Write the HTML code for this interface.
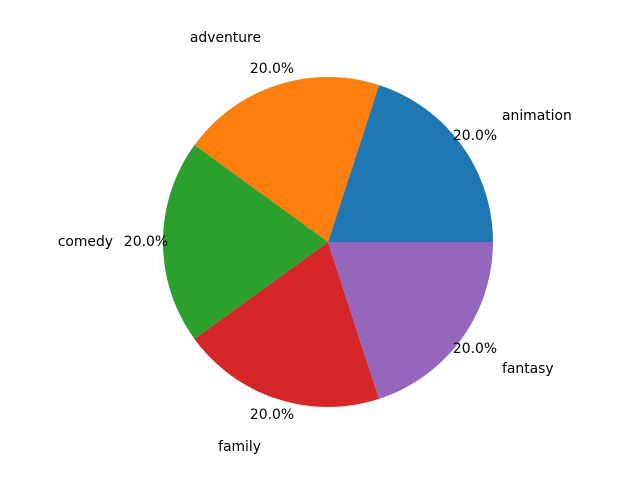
<!DOCTYPE html>
<html><head><meta charset="utf-8"><style>
html,body{margin:0;padding:0;background:#fff;}
svg{display:block;}
text{font-family:"DejaVu Sans","Liberation Sans",sans-serif;font-size:13.9px;fill:#000;dominant-baseline:central;}
</style></head><body>
<svg width="640" height="480" viewBox="0 0 640 480" xmlns="http://www.w3.org/2000/svg">
<rect width="640" height="480" fill="#fff"/>
<path d="M328,242 L493,242 A165,165 0 0 0 379.0,85.1 Z" fill="#1f77b4"/>
<path d="M328,242 L379.0,85.1 A165,165 0 0 0 194.5,145.0 Z" fill="#ff7f0e"/>
<path d="M328,242 L194.5,145.0 A165,165 0 0 0 194.5,339.0 Z" fill="#2ca02c"/>
<path d="M328,242 L194.5,339.0 A165,165 0 0 0 379.0,398.9 Z" fill="#d62728"/>
<path d="M328,242 L379.0,398.9 A165,165 0 0 0 493,242 Z" fill="#9467bd"/>
<text x="502" y="116" text-anchor="start">animation</text>
<text x="261" y="38" text-anchor="end">adventure</text>
<text x="113" y="242" text-anchor="end">comedy</text>
<text x="261" y="447" text-anchor="end">family</text>
<text x="502" y="369" text-anchor="start">fantasy</text>
<text x="475" y="136" text-anchor="middle">20.0%</text>
<text x="272" y="69" text-anchor="middle">20.0%</text>
<text x="146" y="242" text-anchor="middle">20.0%</text>
<text x="272" y="415" text-anchor="middle">20.0%</text>
<text x="475" y="349" text-anchor="middle">20.0%</text>
</svg>
</body></html>
